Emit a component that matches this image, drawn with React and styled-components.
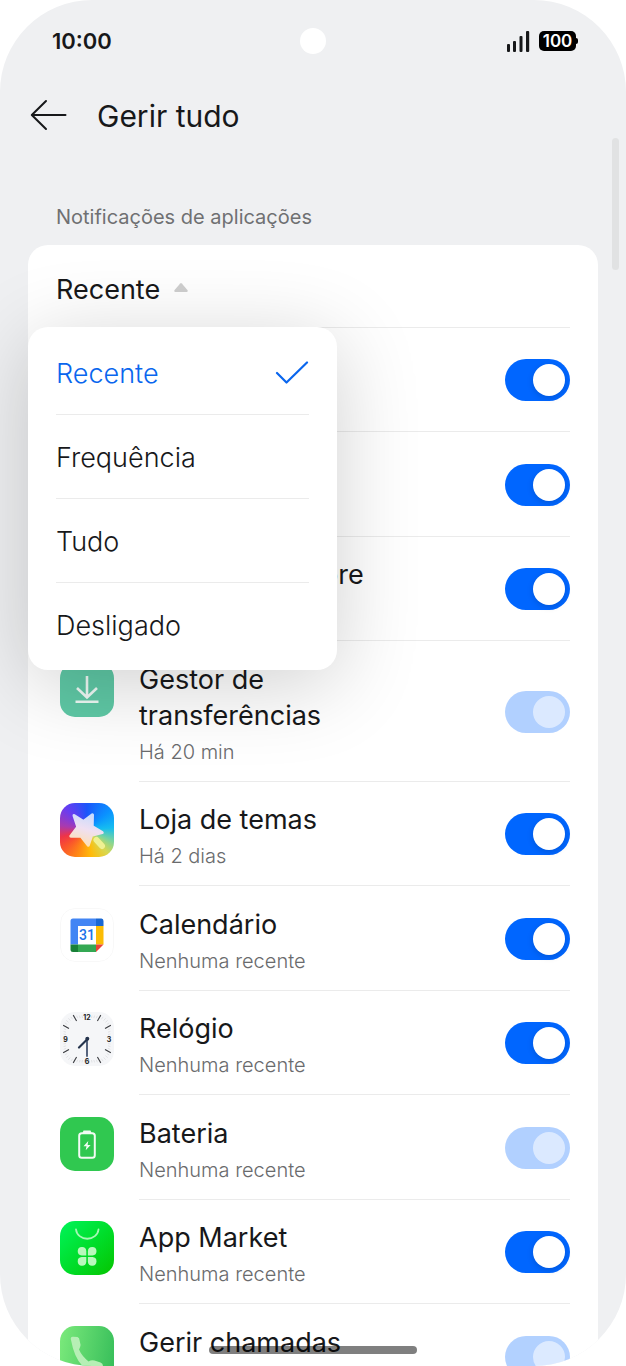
import React, { useState } from "react";
import styled, { createGlobalStyle } from "styled-components";

const GlobalStyle = createGlobalStyle`
  *, *::before, *::after { box-sizing: border-box; }
  body {
    margin: 0;
    background: #fff;
    color: #17181a;
    font-family: Inter, "Liberation Sans", sans-serif;
  }
  button { font: inherit; color: inherit; border: 0; background: none; padding: 0; text-align: left; cursor: pointer; }
  h1, h2, h3, p, ul { margin: 0; padding: 0; font-weight: inherit; }
  svg { display: block; }
`;

const Screen = styled.div`
  position: relative;
  display: flex;
  flex-direction: column;
  height: 100vh;
  overflow: hidden;
  border-radius: 92px;
  background: #eff0f2;
`;

const StatusBar = styled.div`
  flex: none;
  display: grid;
  grid-template-columns: 1fr auto 1fr;
  align-items: center;
  height: 82px;
  padding: 0 50px;
`;

const Clock = styled.time`
  padding-left: 2px;
  font-size: 22px;
  line-height: 28px;
  font-weight: 600;
`;

const Camera = styled.div`
  width: 26px;
  height: 26px;
  border-radius: 50%;
  background: #fff;
`;

const StatusIcons = styled.div`
  display: flex;
  justify-content: flex-end;
  align-items: center;
  gap: 9px;
`;

const Battery = styled.div`
  position: relative;
  width: 37px;
  height: 20px;
  border-radius: 5px;
  background: #000;
  color: #fff;
  font-size: 17px;
  line-height: 20px;
  font-weight: 600;
  text-align: center;

  &::after {
    content: "";
    position: absolute;
    left: 100%;
    top: 7px;
    width: 2px;
    height: 6px;
    border-radius: 0 2px 2px 0;
    background: #000;
  }
`;

const Header = styled.header`
  flex: none;
  display: flex;
  align-items: center;
  gap: 30px;
  height: 66px;
  padding: 0 30px;
`;

const PageTitle = styled.h1`
  padding-top: 2px;
  font-size: 30px;
  line-height: 36px;
  font-weight: 400;
`;

const Content = styled.main`
  flex: none;
  padding: 55px 28px 0;
`;

const SectionLabel = styled.h2`
  padding: 0 28px 14px;
  font-size: 20px;
  line-height: 28px;
  font-weight: 400;
  color: #6f7072;
`;

const Card = styled.section`
  padding: 0 28px;
  border-radius: 20px;
  background: #fff;
`;

const SortBar = styled.div`
  position: relative;
  height: 83px;
  border-bottom: 1px solid #ebebeb;
`;

const SortButton = styled.button`
  display: flex;
  align-items: center;
  gap: 14px;
  width: 100%;
  padding: 27px 0 19px;
  font-size: 27px;
  line-height: 36px;
  font-weight: 400;

  svg { margin-bottom: 6px; }
`;

const Menu = styled.div`
  position: absolute;
  z-index: 1;
  top: 82px;
  left: -28px;
  width: 309px;
  padding: 4px 28px 3px;
  border-radius: 20px;
  background: #fff;
  box-shadow: 0 14px 84px rgba(0, 0, 0, 0.19);
`;

const MenuItem = styled.button`
  display: flex;
  align-items: center;
  justify-content: space-between;
  width: 100%;
  height: 84px;
  padding-top: 2px;
  font-size: 27px;
  line-height: 36px;
  font-weight: 300;
  color: ${({ $selected }) => ($selected ? "#0a66ee" : "#17181a")};

  &:not(:last-child) { border-bottom: 1px solid #ebebeb; }
`;

const AppList = styled.ul`
  list-style: none;
`;

const AppRow = styled.li`
  display: grid;
  grid-template-columns: 54px 1fr;
  gap: 25px;
  padding-left: 4px;

  &:nth-child(odd) { padding-bottom: 1px; }
`;

const AppIcon = styled.div`
  width: 54px;
  height: 54px;
  margin-top: 21px;
  border-radius: 15px;
  overflow: hidden;
  background: ${({ $fill }) => $fill};
`;

const AppBody = styled.div`
  display: flex;
  align-items: center;
  justify-content: space-between;
  min-height: 104px;
  border-bottom: 1px solid #ebebeb;
`;

const AppText = styled.label`
  display: block;
  width: 240px;
  padding: 20px 0 11px;
`;

const AppName = styled.span`
  display: block;
  font-size: 27px;
  line-height: 36px;
  font-weight: 400;
`;

const AppStatus = styled.span`
  display: block;
  min-height: 36px;
  font-size: 20px;
  line-height: 36px;
  font-weight: 300;
  color: #6a6b6d;
`;

const Switch = styled.input`
  appearance: none;
  flex: none;
  width: 65px;
  height: 42px;
  margin: 0;
  padding: 5px;
  border-radius: 21px;
  background: #06f;
  opacity: ${({ disabled }) => (disabled ? 0.3 : 1)};

  &::before {
    content: "";
    display: block;
    width: 32px;
    height: 32px;
    border-radius: 50%;
    background: ${({ disabled }) => (disabled ? "rgba(255,255,255,0.55)" : "#fff")};
    box-shadow: ${({ disabled }) => (disabled ? "none" : "0 2px 6px rgba(0,0,0,0.15)")};
  }
  &:checked::before { margin-left: auto; }
  &:not(:checked) { background: #d5d6d8; }
`;

const ScrollThumb = styled.div`
  position: absolute;
  top: 138px;
  right: 7px;
  width: 7px;
  height: 132px;
  border-radius: 4px;
  background: #e1e2e3;
`;

const HomeIndicator = styled.div`
  position: absolute;
  z-index: 2;
  left: 50%;
  bottom: 12px;
  width: 208px;
  height: 8px;
  margin-left: -104px;
  border-radius: 4px;
  background: rgba(0, 0, 0, 0.5);
`;

const SignalIcon = () => (
  <svg width="23" height="21" viewBox="0 0 23 21" fill="#17181a" aria-hidden="true">
    <rect x="0" y="13" width="3" height="8" rx="1" />
    <rect x="6" y="10" width="3" height="11" rx="1" />
    <rect x="12.5" y="5" width="3" height="16" rx="1" />
    <rect x="19" y="0" width="3.2" height="21" rx="1" />
  </svg>
);

const BackIcon = () => (
  <svg width="37" height="32" viewBox="0 0 37 32" fill="none" stroke="#17181a" strokeWidth="2" strokeLinecap="round" strokeLinejoin="round" aria-hidden="true">
    <path d="M16 2 1.800 16 16 30M2 16h33.500" />
  </svg>
);

const CheckIcon = () => (
  <svg width="34" height="26" viewBox="0 0 34 26" fill="none" stroke="#0a66ee" strokeWidth="2.200" strokeLinecap="round" strokeLinejoin="round" aria-hidden="true">
    <path d="M2 12 11.500 21.500 32 1.500" />
  </svg>
);

const CaretIcon = () => (
  <svg width="14" height="9" viewBox="0 0 14 9" aria-hidden="true">
    <path d="M6.200.500Q7-.300 7.800.500L13.600 7.300Q14 9 12.800 9H1.200Q0 9 .4 7.300Z" fill="#cfcfcf" />
  </svg>
);

const DownloadArt = () => (
  <svg width="54" height="54" viewBox="0 0 54 54" fill="none" stroke="#effaf6" strokeWidth="2.600">
    <path d="M27 13v21M17 25l10 9.500L37 25M15.500 38.800h23" />
  </svg>
);

const ThemesArt = () => (
  <svg width="54" height="54" viewBox="0 0 54 54">
    <defs>
      <linearGradient id="star" gradientUnits="userSpaceOnUse" x1="34" y1="10" x2="24" y2="44">
        <stop offset="0" stopColor="#c3dbff" />
        <stop offset="0.5" stopColor="#efe0f2" />
        <stop offset="1" stopColor="#ffe0b0" />
      </linearGradient>
    </defs>
    <path
      d="M14 12.500 23.500 18.500 32.500 11.800 32.200 23.500 42.200 29.600 31.700 32.200 28.300 42.300 21 33 10.800 33.200 17.800 24Z"
      fill="url(#star)" stroke="url(#star)" strokeWidth="3" strokeLinejoin="round"
    />
    <path d="M36.500 37 42 43" stroke="#eff193" strokeWidth="6" strokeLinecap="round" />
  </svg>
);

const CalendarArt = () => (
  <svg width="54" height="54" viewBox="0 0 54 54">
    <rect x="0.500" y="0.500" width="53" height="53" rx="14.500" fill="#fff" stroke="#f8f8f8" />
    <path d="M13 10.500H36V18H18V36.500H10.500V13Q10.500 10.500 13 10.500Z" fill="#4285f4" />
    <path d="M36 10.500H41.500Q43.500 10.500 43.500 13V18H36Z" fill="#1967d2" />
    <path d="M36 18H43.500V36.500H36Z" fill="#fbbc04" />
    <path d="M10.500 36.500H18V44H13Q10.500 44 10.500 41.500Z" fill="#188038" />
    <path d="M18 36.500H36V44H18Z" fill="#34a853" />
    <path d="M36 36.500H43.500L36 44Z" fill="#ea4335" />
    <text x="27" y="32" textAnchor="middle" fontSize="14" fontWeight="500" fontFamily="Roboto, sans-serif" fill="#1a73e8">31</text>
  </svg>
);

const hourTicks = [30, 60, 120, 150, 210, 240, 300, 330];
const minuteTicks = Array.from({ length: 60 }, (_, i) => i * 6).filter((a) => a % 30 !== 0);

const tickLine = (deg, outer, inner) => {
  const s = Math.sin((deg * Math.PI) / 180);
  const c = -Math.cos((deg * Math.PI) / 180);
  const k = 1 / Math.pow(Math.pow(Math.abs(s), 4) + Math.pow(Math.abs(c), 4), 0.25);
  return { x1: 27 + s * outer * k, y1: 27 + c * outer * k, x2: 27 + s * inner * k, y2: 27 + c * inner * k };
};

const ClockArt = () => (
  <svg width="54" height="54" viewBox="0 0 54 54">
    {minuteTicks.map((a) => <line key={a} {...tickLine(a, 23.5, 21)} stroke="#d3d5d8" strokeWidth="0.600" />)}
    {hourTicks.map((a) => <line key={a} {...tickLine(a, 24.5, 18.500)} stroke="#3a3c40" strokeWidth="1.100" />)}
    <g fontSize="7" fontWeight="700" textAnchor="middle" fill="#222">
      <text x="27" y="8">12</text>
      <text x="49" y="30">3</text>
      <text x="27" y="51.500">6</text>
      <text x="5.500" y="30">9</text>
    </g>
    <path d="M27 26V44" stroke="#44546f" strokeWidth="1.800" strokeLinecap="round" />
    <path d="M27.500 27 19 35.500" stroke="#25344d" strokeWidth="2.200" strokeLinecap="round" />
    <circle cx="27.300" cy="26.800" r="2" fill="#25344d" />
  </svg>
);

const BatteryArt = () => (
  <svg width="54" height="54" viewBox="0 0 54 54">
    <rect x="19.200" y="16.200" width="15.600" height="24.600" rx="2.500" fill="none" stroke="#f2fbf4" strokeWidth="2" />
    <path d="M23.500 13.500h7l1 2.500h-9Z" fill="#f2fbf4" />
    <path d="M28.300 24 23.500 29.300h3l-.8 4 4.900-5.300h-3Z" fill="#f2fbf4" />
  </svg>
);

const MarketArt = () => (
  <svg width="54" height="54" viewBox="0 0 54 54">
    <path d="M16 8.500a11.300 10.200 0 0 0 22.500 0" fill="none" stroke="#a5f7b5" strokeWidth="1.800" strokeLinecap="round" />
    <g fill="#b9f8bd">
      <path d="M26.300 34.500h-4.600a4.300 4.300 0 1 1 4.600-4.600Z" />
      <path d="M27.900 34.500h4.600a4.300 4.300 0 1 0-4.600-4.600Z" />
      <path d="M26.300 36.100h-4.600a4.300 4.300 0 1 0 4.600 4.600Z" />
      <path d="M27.900 36.100h4.600a4.300 4.300 0 1 1-4.600 4.600Z" />
    </g>
  </svg>
);

const PhoneArt = () => (
  <svg width="54" height="54" viewBox="0 0 54 54">
    <path
      d="M11 14Q10 10.500 13 10.800L17.500 11Q19.500 11.500 19.600 14.500L20.600 19Q20.300 21.500 19 23.500Q21.500 29.500 28.500 35.500Q31.500 33.500 34.500 34.500L40.500 36.500Q43.500 37.500 42.800 40.500Q41 46.500 33 46Q16 41.500 11 14Z"
      fill="#b6efb5"
    />
  </svg>
);

const apps = [
  { id: "app-1" },
  { id: "app-2" },
  { id: "play-store", name: "Google Play store" },
  { id: "downloads", name: "Gestor de transferências", status: "Há 20 min", locked: true, fill: "#5fc9a6", Art: DownloadArt },
  {
    id: "themes", name: "Loja de temas", status: "Há 2 dias", Art: ThemesArt,
    fill: "conic-gradient(from 0deg, #1b55fa, #0a92ff 50deg, #15bdf0 85deg, #7fd59a 115deg, #d8d850 138deg, #ffbb0a 170deg, #ff8a14 200deg, #f9502e 235deg, #ee3448 255deg, #a83ab0 280deg, #6a3cf0 315deg, #1b55fa 360deg)",
  },
  { id: "calendar", name: "Calendário", status: "Nenhuma recente", fill: "#fff", Art: CalendarArt },
  { id: "clock", name: "Relógio", status: "Nenhuma recente", fill: "#f5f6f8", Art: ClockArt },
  { id: "battery", name: "Bateria", status: "Nenhuma recente", locked: true, fill: "#30c850", Art: BatteryArt },
  { id: "market", name: "App Market", status: "Nenhuma recente", fill: "linear-gradient(135deg, #00f45a, #00dc28 55%, #06c400)", Art: MarketArt },
  { id: "calls", name: "Gerir chamadas", locked: true, fill: "linear-gradient(100deg, #7cea7c, #35bd59)", Art: PhoneArt },
];

const sortOptions = ["Recente", "Frequência", "Tudo", "Desligado"];

export default function App() {
  const [sort, setSort] = useState("Recente");
  const [open, setOpen] = useState(true);

  return (
    <>
      <GlobalStyle />
      <Screen>
        <StatusBar>
          <Clock>10:00</Clock>
          <Camera />
          <StatusIcons>
            <SignalIcon />
            <Battery>100</Battery>
          </StatusIcons>
        </StatusBar>
        <Header>
          <button type="button" aria-label="Voltar"><BackIcon /></button>
          <PageTitle>Gerir tudo</PageTitle>
        </Header>
        <Content>
          <SectionLabel>Notificações de aplicações</SectionLabel>
          <Card>
            <SortBar>
              <SortButton type="button" aria-haspopup="menu" aria-expanded={open} onClick={() => setOpen(!open)}>
                {sort}
                <CaretIcon />
              </SortButton>
              {open && (
                <Menu role="menu">
                  {sortOptions.map((option) => (
                    <MenuItem
                      key={option}
                      type="button"
                      role="menuitemradio"
                      aria-checked={option === sort}
                      $selected={option === sort}
                      onClick={() => { setSort(option); setOpen(false); }}
                    >
                      {option}
                      {option === sort && <CheckIcon />}
                    </MenuItem>
                  ))}
                </Menu>
              )}
            </SortBar>
            <AppList>
              {apps.map(({ id, name, status, locked, fill, Art }) => (
                <AppRow key={id}>
                  <AppIcon $fill={fill}>{Art && <Art />}</AppIcon>
                  <AppBody>
                    <AppText htmlFor={id}>
                      {name && <AppName>{name}</AppName>}
                      <AppStatus>{status}</AppStatus>
                    </AppText>
                    <Switch
                      id={id}
                      type="checkbox"
                      role="switch"
                      aria-label={name || "Notificações da aplicação"}
                      defaultChecked
                      disabled={locked}
                    />
                  </AppBody>
                </AppRow>
              ))}
            </AppList>
          </Card>
        </Content>
        <ScrollThumb />
        <HomeIndicator />
      </Screen>
    </>
  );
}
